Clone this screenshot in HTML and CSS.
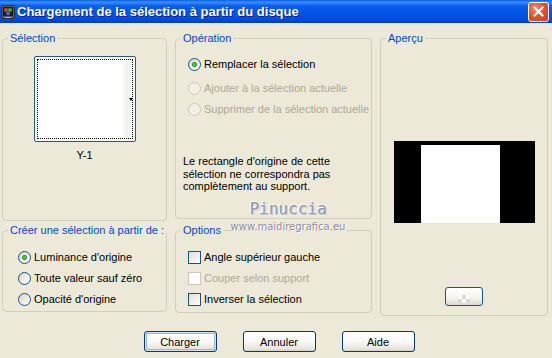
FILE: index.html
```html
<!DOCTYPE html>
<html lang="fr">
<head>
  <meta charset="UTF-8">
  <title>Chargement de la sélection à partir du disque</title>
  <link rel="stylesheet" href="styles.css">
</head>
<body>

<div class="dialog">
  <div class="titlebar">
    <svg class="app-icon" width="14" height="14" viewBox="0 0 14 14">
      <rect x="0.5" y="0.5" width="13" height="13" rx="1" fill="#5a5a5a" stroke="#2a2a2a"/>
      <rect x="2" y="2" width="10" height="9" fill="#1b1b1b"/>
      <circle cx="5" cy="5" r="2" fill="#e03a2f"/>
      <circle cx="9" cy="5" r="2" fill="#2fae3c"/>
      <circle cx="7" cy="8.5" r="2" fill="#2f6fe0"/>
      <rect x="4" y="12" width="6" height="1" fill="#b8b8b8"/>
    </svg>
    <span class="title">Chargement de la sélection à partir du disque</span>
    <button class="close" type="button">
      <svg width="11" height="11" viewBox="0 0 11 11">
        <path d="M1.5 1.5 L9.5 9.5 M9.5 1.5 L1.5 9.5" stroke="#fff" stroke-width="2" stroke-linecap="square"/>
      </svg>
    </button>
  </div>

  <div class="content">
    <fieldset class="group sel">
      <legend>Sélection</legend>
      <div class="swatch">
        <div class="swatch-inner"></div>
        <span class="drop"></span>
      </div>
      <div class="swatch-label">Y-1</div>
    </fieldset>

    <fieldset class="group op">
      <legend>Opération</legend>
      <label class="row r1"><input class="radio" type="radio" name="op" checked> Remplacer la sélection</label>
      <label class="row r2 off"><input class="radio" type="radio" name="op" disabled> Ajouter à la sélection actuelle</label>
      <label class="row r3 off"><input class="radio" type="radio" name="op" disabled> Supprimer de la sélection actuelle</label>
      <p class="note">Le rectangle d'origine de cette<br>sélection ne correspondra pas<br>complètement au support.</p>
    </fieldset>

    <fieldset class="group preview">
      <legend>Aperçu</legend>
      <div class="preview-img"><div class="preview-white"></div></div>
      <button class="mini" type="button"><span class="checker"></span></button>
    </fieldset>

    <fieldset class="group create">
      <legend>Créer une sélection à partir de :</legend>
      <div class="rows">
        <label class="row"><input class="radio" type="radio" name="src" checked> Luminance d'origine</label>
        <label class="row"><input class="radio" type="radio" name="src"> Toute valeur sauf zéro</label>
        <label class="row"><input class="radio" type="radio" name="src"> Opacité d'origine</label>
      </div>
    </fieldset>

    <fieldset class="group opts">
      <legend>Options</legend>
      <div class="rows">
        <label class="row"><input class="check" type="checkbox"> Angle supérieur gauche</label>
        <label class="row off"><input class="check" type="checkbox" disabled> Couper selon support</label>
        <label class="row"><input class="check" type="checkbox"> Inverser la sélection</label>
      </div>
    </fieldset>
  </div>

  <div class="actions">
    <button class="btn default" type="button">Charger</button>
    <button class="btn" type="button">Annuler</button>
    <button class="btn" type="button">Aide</button>
  </div>

  <div class="watermark">
    <div class="wm-name">Pinuccia</div>
    <div class="wm-site">www.maidiregrafica.eu</div>
  </div>
</div>

</body>
</html>
```

FILE: styles.css
```css
* {
  box-sizing: border-box;
}
body {
  margin: 0;
  background-color: #ece9d8;
  font-family: 'Liberation Sans', Arial, sans-serif;
  font-size: 11px;
  color: #000;
  overflow: hidden;
}
.dialog {
  position: relative;
  width: 552px;
  height: 358px;
  background-color: #ece9d8;
}

/* title bar */
.titlebar {
  height: 23px;
  display: flex;
  align-items: center;
  padding-left: 1px;
  background: linear-gradient(#0a5fe6 0, #3b8cff 10%, #0a5ef0 25%, #0054e3 60%, #004ddc 85%, #003bbf 100%);
}
.app-icon {
  flex: none;
  margin-top: 1px;
}
.title {
  margin-left: 2px;
  color: #fff;
  font-size: 13px;
  font-weight: bold;
  line-height: 23px;
  text-shadow: 1px 1px 0 #0a1e8a;
  white-space: nowrap;
}
.close {
  margin-left: auto;
  margin-right: 3px;
  width: 21px;
  height: 20px;
  padding: 0;
  border: 1px solid #fff;
  border-radius: 3px;
  background: radial-gradient(circle at 35% 30%, #f08a6a 0, #e3572f 45%, #c8391a 100%);
  display: flex;
  align-items: center;
  justify-content: center;
}

/* group boxes */
.content {
  display: grid;
  grid-template-columns: 165px 197px 168px;
  grid-template-rows: 189px 92px;
  column-gap: 8px;
  row-gap: 3px;
  padding: 9px 0 0 2px;
}
.group {
  margin: 0;
  padding: 0;
  min-width: 0;
  border: 1px solid #d0d0bf;
  border-radius: 4px;
}
.group legend {
  margin-left: 5px;
  padding: 0 2px;
  color: #0046d5;
  line-height: 13px;
  white-space: nowrap;
}
.sel { grid-column: 1; grid-row: 1; }
.op { grid-column: 2; grid-row: 1; height: 187px; }
.preview { grid-column: 3; grid-row: 1 / span 2; }
.create { grid-column: 1; grid-row: 2; height: 88px; }
.opts { grid-column: 2; grid-row: 2; height: 89px; }
.rows {
  padding-top: 14px;
}
.create .rows { padding-left: 15px; }
.opts .rows { padding-left: 12px; }

/* sélection */
.swatch {
  position: relative;
  width: 102px;
  height: 86px;
  margin: 11px auto 0;
  padding: 2px;
  border: 1px solid #2b5589;
  border-radius: 2px;
  background-color: #fff;
}
.swatch-inner {
  height: 100%;
  border: 1px dotted #000;
  background: linear-gradient(to right, #fff 88%, #f0f0ee 95%, #f7f7f5 100%);
}
.drop {
  position: absolute;
  left: 94px;
  top: 41px;
  border-left: 2.5px solid transparent;
  border-right: 2.5px solid transparent;
  border-top: 3px solid #000;
}
.swatch-label {
  margin-top: 7px;
  text-align: center;
  line-height: 13px;
}

/* rows */
.row {
  display: flex;
  align-items: center;
  gap: 3px;
  height: 13px;
  line-height: 13px;
  white-space: nowrap;
}
.rows .row + .row {
  margin-top: 8px;
}
.op .row {
  margin-left: 12px;
}
.op .r1 { margin-top: 13px; }
.op .r2 { margin-top: 11px; }
.op .r3 { margin-top: 8px; }
.off {
  color: #aca899;
}
.radio {
  appearance: none;
  flex: none;
  width: 13px;
  height: 13px;
  margin: 0;
  border: 1px solid #1c5180;
  border-radius: 50%;
  background: linear-gradient(135deg, #d6d5cc, #fff);
}
.radio:checked {
  background: radial-gradient(circle, #5ee05e 0, #21a121 2px, rgba(33, 161, 33, 0) 3px), linear-gradient(135deg, #d6d5cc, #fff);
}
.radio:disabled {
  border-color: #cac8bb;
  background: #f2f0e4;
}
.check {
  appearance: none;
  flex: none;
  width: 13px;
  height: 13px;
  margin: 0;
  border: 1px solid #1c5180;
  background: linear-gradient(135deg, #dcdcd7, #fff);
}
.check:disabled {
  border-color: #cac8bb;
  background: #fff;
}
.note {
  margin: 39px 0 0 7px;
  line-height: 12.5px;
}

/* aperçu */
.preview-img {
  width: 141px;
  height: 82px;
  margin: 96px auto 0;
  padding: 4px 0 0 27px;
  background-color: #000;
}
.preview-white {
  width: 79px;
  height: 100%;
  background-color: #fff;
}
.mini {
  display: flex;
  align-items: flex-end;
  justify-content: center;
  width: 38px;
  height: 19px;
  margin: 64px auto 0;
  padding: 0 0 2px;
  border: 1px solid #1c4f8c;
  border-radius: 3px;
  background: linear-gradient(#fff, #f5f4ef 60%, #dcd9cf);
}
.checker {
  width: 12px;
  height: 8px;
  background: repeating-conic-gradient(#d9d9d6 0 25%, #fff 0 50%) 0 0 / 8px 8px;
}

/* buttons */
.actions {
  display: flex;
  justify-content: center;
  gap: 26px;
  margin-top: 15px;
  padding-left: 6px;
}
.btn {
  width: 73px;
  height: 21px;
  padding: 0;
  border: 1px solid #003c74;
  border-radius: 3px;
  background: linear-gradient(#fff, #f7f7f3 55%, #e6e3da 90%, #d6d0c5);
  font-family: 'Liberation Sans', Arial, sans-serif;
  font-size: 11px;
  color: #000;
}
.btn.default {
  box-shadow: inset 0 0 0 1px #cee7ff, inset 0 0 0 2px #98b8ea;
}

/* watermark */
.watermark {
  position: absolute;
  left: 226px;
  top: 200px;
  width: 124px;
  text-align: center;
  pointer-events: none;
}
.wm-name {
  font-family: 'DejaVu Sans Mono', monospace;
  font-size: 16px;
  line-height: 18px;
  color: #9498b0;
  text-shadow: -1px -1px 0 #fff, 1px 1px 0 #c9c9d4;
}
.wm-site {
  margin-top: 3px;
  font-family: 'DejaVu Sans', sans-serif;
  font-size: 10px;
  line-height: 12px;
  color: #8c8ea0;
  text-shadow: 1px 1px 0 #fff;
}
```
